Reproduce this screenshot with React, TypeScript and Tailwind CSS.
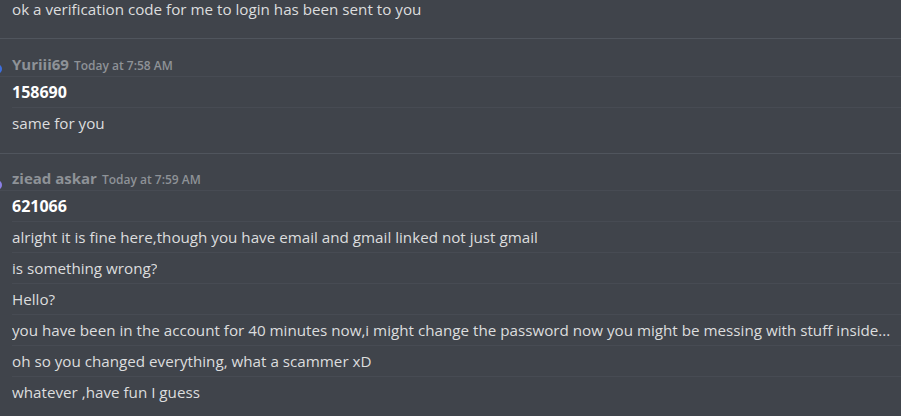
import React from 'react'

type Line = { text: string; bold?: boolean }

const yuriLines: Line[] = [{ text: '158690', bold: true }, { text: 'same for you' }]

const zieadLines: Line[] = [
  { text: '621066', bold: true },
  { text: 'alright it is fine here,though you have email and gmail linked not just gmail' },
  { text: 'is something wrong?' },
  { text: 'Hello?' },
  {
    text: 'you have been in the account for 40 minutes now,i might change the password now you might be messing with stuff inside...',
  },
  { text: 'oh so you changed everything, what a scammer xD' },
  { text: 'whatever ,have fun I guess' },
]

function Header({
  name,
  time,
  avatar,
  h,
}: {
  name: string
  time: string
  avatar: string
  h: string
}) {
  return (
    <div className={`relative ${h} flex items-end border-b border-[#474b53]`}>
      {/* avatar, mostly scrolled off the left edge */}
      <div className={`absolute -left-[8px] w-[10px] h-[10px] rounded-full ${avatar}`} />
      <div className="pl-3 flex items-baseline gap-[5px] leading-5">
        <span className="text-[15px] font-bold text-[#8e9297]">{name}</span>
        <span className="text-[12px] font-semibold text-[#8e9297]">{time}</span>
      </div>
    </div>
  )
}

function Rows({ lines }: { lines: Line[] }) {
  return (
    <div className="pl-3">
      {lines.map((l, i) => (
        <div
          key={i}
          className={`flex items-center min-w-0 ${
            i < lines.length - 1 ? 'h-[31px] border-b border-[#474b53]' : 'h-[30px]'
          }`}
        >
          <span
            className={`truncate ${
              l.bold ? 'text-[16px] font-bold text-white' : 'text-[15.2px] text-[#dcddde]'
            }`}
          >
            {l.text}
          </span>
        </div>
      ))}
    </div>
  )
}

export default function App() {
  return (
    <div
      className="relative w-[901px] h-[416px] overflow-hidden bg-[#40444b] text-[#dcddde]"
      style={{ fontFamily: '"Open Sans", "Noto Sans", sans-serif' }}
    >
      <div className="h-[38px] pl-3">
        <div className="h-[18px] flex items-center text-[15.2px]">
          ok a verification code for me to login has been sent to you
        </div>
      </div>

      <div className="border-t border-[#50555d] h-[115px]">
        <Header name="Yuriii69" time="Today at 7:58 AM" avatar="bg-[#3d6fe0] top-[25px]" h="h-[38px]" />
        <Rows lines={yuriLines} />
      </div>

      <div className="border-t border-[#50555d]">
        <Header name="ziead askar" time="Today at 7:59 AM" avatar="bg-[#8b7fe6] top-[26px]" h="h-[37px]" />
        <Rows lines={zieadLines} />
      </div>
    </div>
  )
}
